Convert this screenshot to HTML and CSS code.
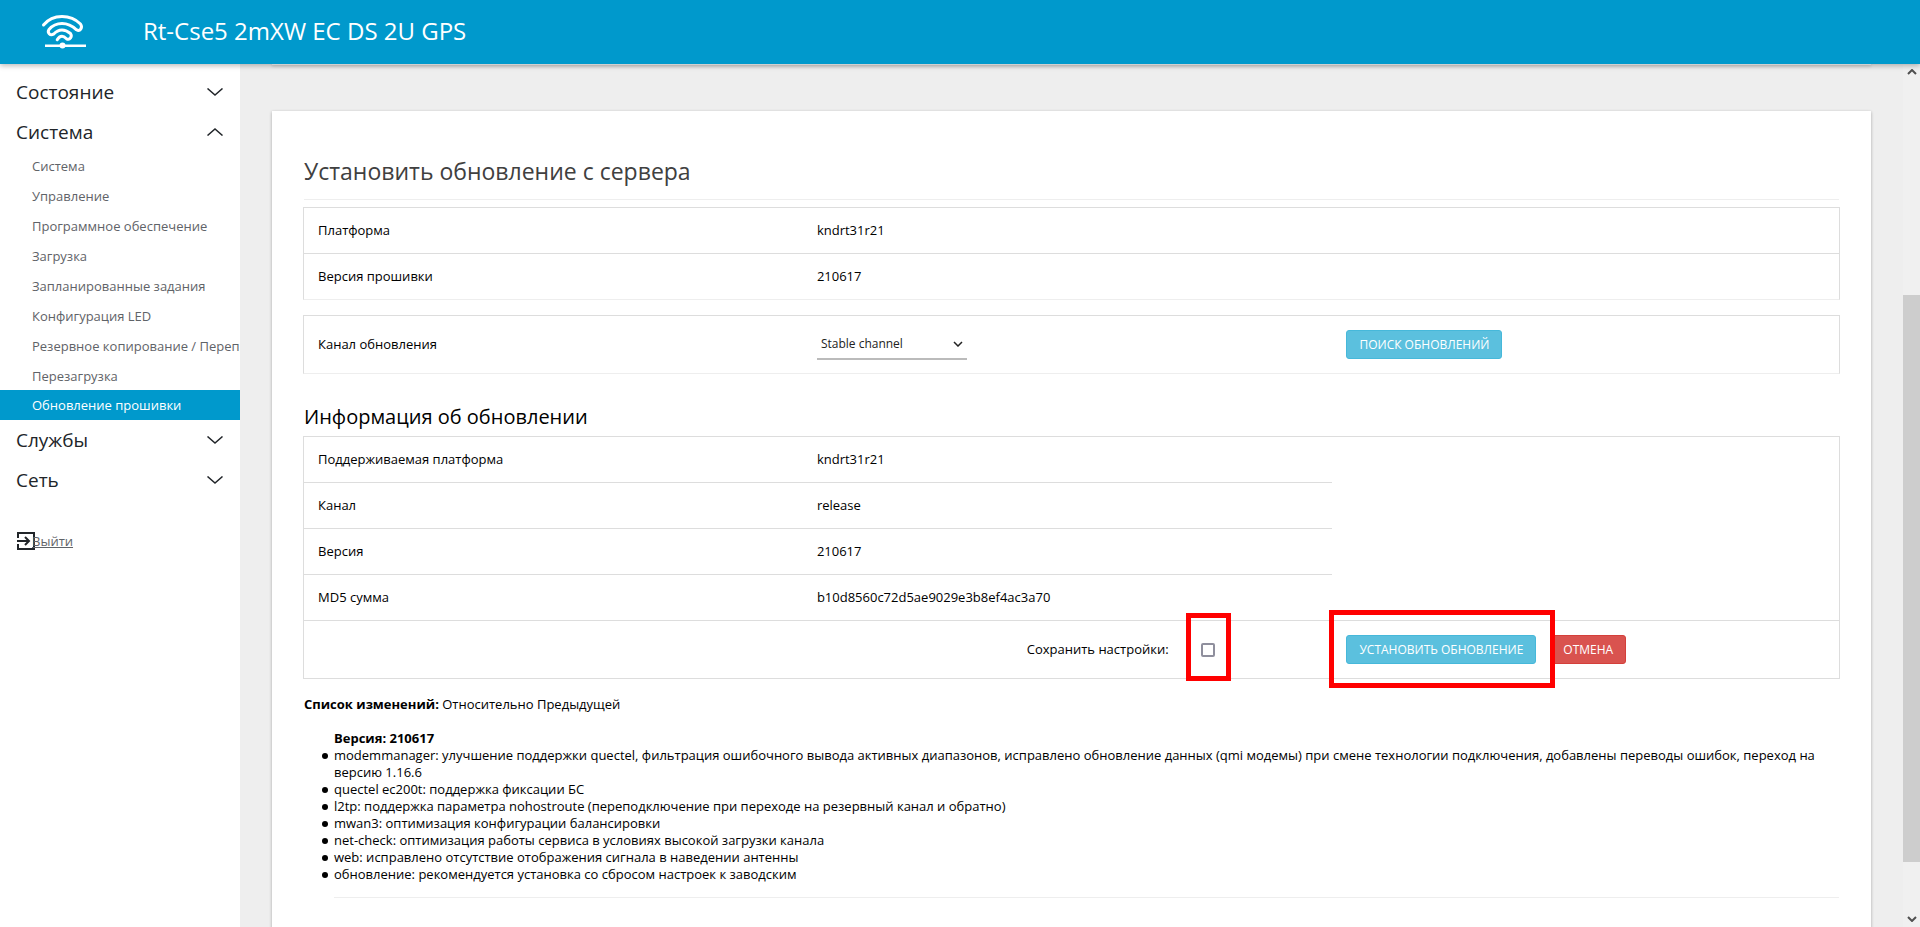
FILE: index.html
```html
<!DOCTYPE html>
<html lang="ru">
<head>
<meta charset="utf-8">
<title>Обновление прошивки</title>
<link rel="stylesheet" href="styles.css">
</head>
<body>
<header class="topbar">
  <svg class="logo" viewBox="0 0 48 40" fill="none" stroke="#fff" stroke-width="3" stroke-linecap="round" stroke-linejoin="round" aria-hidden="true">
    <path d="M3.500 13C8 7.500 14 4.500 22 4.500C30 4.500 36 7.500 40.500 12C43 15.500 40 20 36.500 17.800C33 14.500 28 11.500 22 11.500C16 11.500 12 14 9 17.500C7 20.500 10 24 13.500 22.200C16 19.500 19 18 22 18C26 18 28 19.500 30.500 21.500C32.500 24.500 30 28.500 26.500 26.800C25 25.300 24 24.300 22 24.300C20 24.300 18.500 25.500 17.200 27.800"/>
    <path d="M5 33.700H46" stroke-width="2.500" stroke-linecap="butt"/>
    <circle cx="22.500" cy="33.500" r="3" fill="#fff" stroke="none"/>
  </svg>
  <h1 class="device">Rt-Cse5 2mXW EC DS 2U GPS</h1>
</header>
<div class="shell">
  <nav class="sidebar">
    <button class="group" type="button">Состояние<svg class="chev" viewBox="0 0 16 8"><path d="M0.500 0.500L8 7L15.500 0.500"/></svg></button>
    <button class="group" type="button">Система<svg class="chev" viewBox="0 0 16 8"><path d="M0.500 7.500L8 1L15.500 7.500"/></svg></button>
    <ul class="submenu">
      <li><a href="#">Система</a></li>
      <li><a href="#">Управление</a></li>
      <li><a href="#">Программное обеспечение</a></li>
      <li><a href="#">Загрузка</a></li>
      <li><a href="#">Запланированные задания</a></li>
      <li><a href="#">Конфигурация LED</a></li>
      <li><a href="#">Резервное копирование / Перепрошивка</a></li>
      <li><a href="#">Перезагрузка</a></li>
      <li><a class="active" href="#">Обновление прошивки</a></li>
    </ul>
    <button class="group" type="button">Службы<svg class="chev" viewBox="0 0 16 8"><path d="M0.500 0.500L8 7L15.500 0.500"/></svg></button>
    <button class="group" type="button">Сеть<svg class="chev" viewBox="0 0 16 8"><path d="M0.500 0.500L8 7L15.500 0.500"/></svg></button>
    <a class="logout" href="#"><svg class="exit" viewBox="0 0 18 18"><path d="M1 6V1H17V17H1V12M0 9H12M8 5L12 9L8 13"/></svg>Выйти</a>
  </nav>
  <main class="content">
    <section class="card card-prev"></section>
    <section class="card">
      <h2 class="title">Установить обновление с сервера</h2>
      <table class="grid soft">
        <colgroup><col class="c-name"><col class="c-value"><col class="c-act"></colgroup>
        <tr><td>Платформа</td><td colspan="2">kndrt31r21</td></tr>
        <tr><td>Версия прошивки</td><td colspan="2">210617</td></tr>
      </table>
      <table class="grid soft">
        <colgroup><col class="c-name"><col class="c-value"><col class="c-act"></colgroup>
        <tr class="tall">
          <td><label for="channel">Канал обновления</label></td>
          <td><div class="pick"><select id="channel"><option>Stable channel</option></select><svg class="caret" viewBox="0 0 10 6"><path d="M1 1L5 5L9 1"/></svg></div></td>
          <td><button class="btn info" type="button">Поиск обновлений</button></td>
        </tr>
      </table>
      <h3 class="subtitle">Информация об обновлении</h3>
      <table class="grid">
        <colgroup><col class="c-name"><col class="c-keep"><col class="c-check"><col class="c-act"></colgroup>
        <tr><td>Поддерживаемая платформа</td><td colspan="2">kndrt31r21</td></tr>
        <tr><td>Канал</td><td colspan="2">release</td></tr>
        <tr><td>Версия</td><td colspan="2">210617</td></tr>
        <tr><td>MD5 сумма</td><td colspan="2">b10d8560c72d5ae9029e3b8ef4ac3a70</td></tr>
        <tr class="tall">
          <td></td>
          <td class="right"><label for="keep">Сохранить настройки:</label></td>
          <td class="anchor"><input class="check" id="keep" type="checkbox"><span class="mark mark-check"></span></td>
          <td class="anchor"><div class="actions"><button class="btn info" type="button">Установить обновление</button><button class="btn danger" type="button">Отмена</button></div><span class="mark mark-install"></span></td>
        </tr>
      </table>
      <p class="changes"><b>Список изменений:</b> Относительно Предыдущей</p>
      <div class="log">
        <b>Версия: 210617</b>
        <ul>
          <li>modemmanager: улучшение поддержки quectel, фильтрация ошибочного вывода активных диапазонов, исправлено обновление данных (qmi модемы) при смене технологии подключения, добавлены переводы ошибок, переход на версию 1.16.6</li>
          <li>quectel ec200t: поддержка фиксации БС</li>
          <li>l2tp: поддержка параметра nohostroute (переподключение при переходе на резервный канал и обратно)</li>
          <li>mwan3: оптимизация конфигурации балансировки</li>
          <li>net-check: оптимизация работы сервиса в условиях высокой загрузки канала</li>
          <li>web: исправлено отсутствие отображения сигнала в наведении антенны</li>
          <li>обновление: рекомендуется установка со сбросом настроек к заводским</li>
        </ul>
      </div>
    </section>
  </main>
  <div class="scrollbar" aria-hidden="true">
    <svg class="arrow" viewBox="0 0 10 6"><path d="M1 5L5 1L9 5"/></svg>
    <div class="track"><div class="thumb"></div></div>
    <svg class="arrow" viewBox="0 0 10 6"><path d="M1 1L5 5L9 1"/></svg>
  </div>
</div>
</body>
</html>
```
FILE: styles.css
```css
* { box-sizing: border-box; }

body {
  margin: 0;
  height: 100vh;
  display: flex;
  flex-direction: column;
  overflow: hidden;
  background: #eee;
  color: #000;
  font: 13px/17px "Open Sans", "Noto Sans", sans-serif;
}

h1, h2, h3, p, ul { margin: 0; padding: 0; font-weight: 400; }
button, select, input { font: inherit; margin: 0; }
svg { fill: none; }

.topbar {
  flex: none;
  height: 64px;
  display: flex;
  align-items: center;
  padding-left: 40px;
  background: #0099cc;
  color: #fff;
  box-shadow: 0 2px 5px rgba(0, 0, 0, .26);
  z-index: 2;
}
.logo { width: 48px; height: 40px; margin-right: 55px; }
.device { padding-bottom: 2px; font-size: 24px; line-height: 32px; }

.shell { flex: 1; min-height: 0; display: flex; }

.sidebar {
  flex: none;
  width: 240px;
  padding-top: 8px;
  overflow: hidden;
  background: #fff;
}
.group {
  width: 100%;
  height: 40px;
  display: flex;
  align-items: center;
  justify-content: space-between;
  padding: 0 17px 0 16px;
  border: 0;
  background: none;
  color: #212529;
  font-size: 19px;
  text-align: left;
}
.chev { width: 16px; height: 8px; stroke: #212529; stroke-width: 1.5; }

.submenu { margin-top: -2px; list-style: none; }
.submenu a {
  display: block;
  height: 30px;
  padding: 3px 0 0 32px;
  color: #5f6368;
  line-height: 27px;
  text-decoration: none;
  white-space: nowrap;
}
.submenu .active { padding-top: 0; line-height: 30px; background: #0099cc; color: #fff; }

.logout {
  display: flex;
  align-items: center;
  margin: 32px 0 0 17px;
  color: #5f6368;
}
.exit { width: 18px; height: 18px; margin-right: -3px; stroke: #212529; stroke-width: 2; }

.content { flex: 1; min-width: 0; padding: 0 32px; overflow: hidden; }
.card {
  padding: 44px 32px 32px;
  background: #fff;
  box-shadow: 0 1px 3px rgba(0, 0, 0, .3);
}
.card-prev { padding: 0; height: 1px; margin-bottom: 46px; }

.title {
  padding-bottom: 11px;
  margin-bottom: 7px;
  border-bottom: 1px solid #eee;
  color: #404040;
  font-size: 23px;
  line-height: 33px;
}
.subtitle { margin: 26px 0 2px; font-size: 20px; line-height: 34px; }

.grid {
  width: calc(100% + 2px);
  margin-left: -1px;
  table-layout: fixed;
  border-collapse: separate;
  border-spacing: 0;
  border: 1px solid #ddd;
}
.grid + .grid { margin-top: 15px; }
.soft { border-bottom-color: #eee; }
.grid td { height: 46px; padding: 0 14px; }
.grid tr + tr td { border-top: 1px solid #ddd; }
.grid tr:first-child td { height: 45px; }
.grid .tall td { height: 58px; }
.grid .tall:first-child td { height: 57px; }
.grid .right { padding-right: 18px; text-align: right; }
.c-name { width: 32.5%; }
.c-value { width: 34.5%; }
.c-keep { width: 25%; }
.c-check { width: 9.5%; }
.c-act { width: 33%; }

.pick { position: relative; width: 150px; }
.pick select {
  width: 100%;
  height: 30px;
  padding: 0 4px;
  border: 0;
  border-bottom: 2px solid #bbb;
  background: transparent;
  color: #222;
  font-size: 12px;
  appearance: none;
}
.caret { position: absolute; right: 4px; top: 11px; width: 10px; height: 6px; stroke: #222; stroke-width: 1.5; pointer-events: none; }

.btn {
  height: 29px;
  padding: 0 12px;
  border: 1px solid;
  border-radius: 3px;
  color: #fff;
  font-size: 12px;
  line-height: 17px;
  text-transform: uppercase;
  white-space: nowrap;
}
.info { background: #5bc0de; border-color: #46b8da; }
.danger { background: #d9534f; border-color: #d43f3a; }
.actions { display: flex; gap: 14px; }

.check {
  display: block;
  width: 14px;
  height: 14px;
  appearance: none;
  border: 2px solid #8f8f9d;
  border-radius: 2px;
  background: #fff;
}
.anchor { position: relative; }
.mark { position: absolute; border: 5px solid #f00; pointer-events: none; }
.mark-check { left: -1px; top: -8px; width: 45px; height: 68px; }
.mark-install { left: -3px; top: -11px; width: 226px; height: 78px; }

.changes { margin-top: 17px; }
.log { margin: 17px 0 0 30px; padding-bottom: 14px; border-bottom: 1px solid #eee; }
.log b { display: block; }
.log ul { margin-left: -12px; list-style: none; }
.log li { display: flex; gap: 6px; }
.log li::before {
  content: "";
  flex: none;
  width: 6px;
  height: 6px;
  margin-top: 6px;
  border-radius: 50%;
  background: #000;
}

.scrollbar {
  flex: none;
  width: 17px;
  display: flex;
  flex-direction: column;
  align-items: center;
  padding: 5px 0;
  background: #f0f0f0;
}
.arrow { flex: none; width: 10px; height: 6px; stroke: #505050; stroke-width: 2; }
.track { flex: 1; width: 100%; margin: 6px 0; }
.track::before { content: ""; display: block; height: 25.8%; }
.thumb { height: 68.4%; background: #cdcdcd; }
```
